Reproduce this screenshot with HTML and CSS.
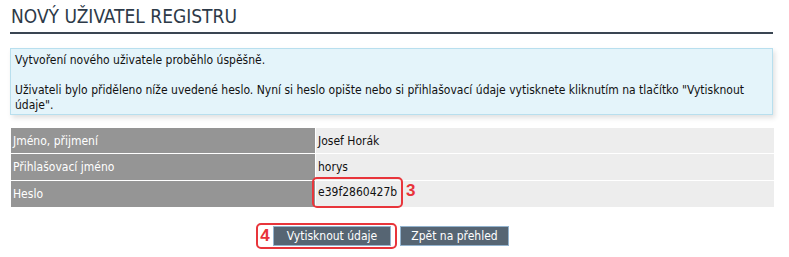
FILE: index.html
```html
<!DOCTYPE html>
<html>
<head>
    <title>Nový uživatel registru</title>
    <meta charset="UTF-8">
<link rel="stylesheet" href="styles.css">
</head>
<body>
<div class="page">
    <h1 class="page-title">Nový uživatel registru</h1>

    <div class="info">
        <p>Vytvoření nového uživatele proběhlo úspěšně.</p>
        <p>Uživateli bylo přiděleno níže uvedené heslo. Nyní si heslo opište nebo si přihlašovací údaje vytisknete kliknutím na tlačítko "Vytisknout údaje".</p>
    </div>

    <table class="user">
        <tr>
            <th>Jméno, přijmení</th>
            <td>Josef Horák</td>
        </tr>
        <tr>
            <th>Přihlašovací jméno</th>
            <td>horys</td>
        </tr>
        <tr>
            <th>Heslo</th>
            <td><span class="mark mark-pass">e39f2860427b<span class="mark-num">3</span></span></td>
        </tr>
    </table>

    <div class="actions">
        <span class="mark mark-btn"><span class="mark-num">4</span><button class="btn">Vytisknout údaje</button></span>
        <button class="btn">Zpět na přehled</button>
    </div>
</div>
</body>
</html>
```

FILE: styles.css
```css
/* page */
    body{
        margin:0;
        background-color:#fff;
        font:normal 12px "DejaVu Sans Condensed", "DejaVu Sans", Verdana, sans-serif;
        color:#111;
    }
    .page{
        padding:0 16px 0 10px;
    }
    .page-title{
        margin:0;
        padding:6px 0 5px 1px;
        font-size:19px;
        line-height:21px;
        font-weight:normal;
        text-transform:uppercase;
        color:#2d3a48;
        border-bottom:2px solid #3a4552;
    }
/* info */
    .info{
        margin:14px 0 13px;
        padding:4px 4px 1px;
        background-color:#e4f4fa;
        border:1px solid #b8dfee;
        box-shadow:2px 3px 5px rgba(0,0,0,.12);
    }
    .info p{
        margin:0 0 15px;
        line-height:15px;
    }
    .info p:last-child{
        margin:0;
    }
/* table */
    .user{
        width:100%;
        margin-left:1px;
        border-collapse:collapse;
    }
    .user th,
    .user td{
        height:26px;
        padding:0 2px;
        border-bottom:1px solid #fff;
        text-align:left;
        vertical-align:middle;
    }
    .user tr:first-child th,
    .user tr:first-child td{
        height:25px;
    }
    .user tr:last-child th,
    .user tr:last-child td{
        border-bottom:0;
    }
    .user th{
        width:300px;
        background-color:#959595;
        color:#fff;
        font-weight:normal;
        border-right:1px solid #fff;
    }
    .user td{
        background-color:#ededed;
    }
/* annotations */
    .mark{
        position:relative;
        display:inline-block;
        border:2px solid #e8353b;
        border-radius:5px;
    }
    .mark-num{
        color:#e8333a;
        font:bold 17px "Liberation Sans", Arial, sans-serif;
    }
    .mark-pass{
        margin:-4px 0 -1px -6px;
        padding:6px 4px 6px 4px;
        line-height:15px;
        vertical-align:top;
    }
    .mark-pass .mark-num{
        position:absolute;
        left:calc(100% + 5px);
        top:3px;
        line-height:17px;
    }
    .mark-btn{
        display:inline-flex;
        align-items:center;
        padding:1px 4px 1px 2px;
    }
    .mark-btn .mark-num{
        margin-right:3px;
    }
/* buttons */
    .actions{
        display:flex;
        justify-content:center;
        align-items:center;
        gap:3px;
        margin:16px 0 0 -18px;
    }
    .btn{
        height:20px;
        padding:0 10px;
        background-color:#566573;
        border:1px solid #93b3ce;
        color:#fff;
        font:normal 12px "DejaVu Sans Condensed", "DejaVu Sans", Verdana, sans-serif;
    }
    .mark-btn .btn{
        padding:0 13px;
    }
```
